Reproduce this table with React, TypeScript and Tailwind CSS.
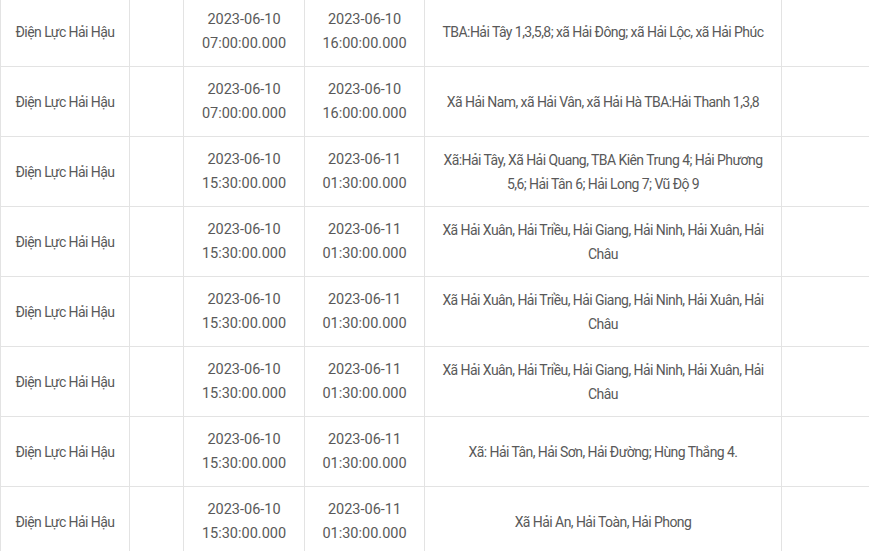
const rows = [
  { from: '2023-06-10', fromT: '07:00:00.000', to: '2023-06-10', toT: '16:00:00.000', area: 'TBA:Hải Tây 1,3,5,8; xã Hải Đông; xã Hải Lộc, xã Hải Phúc' },
  { from: '2023-06-10', fromT: '07:00:00.000', to: '2023-06-10', toT: '16:00:00.000', area: 'Xã Hải Nam, xã Hải Vân, xã Hải Hà TBA:Hải Thanh 1,3,8' },
  { from: '2023-06-10', fromT: '15:30:00.000', to: '2023-06-11', toT: '01:30:00.000', area: 'Xã:Hải Tây, Xã Hải Quang, TBA Kiên Trung 4; Hải Phương 5,6; Hải Tân 6; Hải Long 7; Vũ Độ 9' },
  { from: '2023-06-10', fromT: '15:30:00.000', to: '2023-06-11', toT: '01:30:00.000', area: 'Xã Hải Xuân, Hải Triều, Hải Giang, Hải Ninh, Hải Xuân, Hải Châu' },
  { from: '2023-06-10', fromT: '15:30:00.000', to: '2023-06-11', toT: '01:30:00.000', area: 'Xã Hải Xuân, Hải Triều, Hải Giang, Hải Ninh, Hải Xuân, Hải Châu' },
  { from: '2023-06-10', fromT: '15:30:00.000', to: '2023-06-11', toT: '01:30:00.000', area: 'Xã Hải Xuân, Hải Triều, Hải Giang, Hải Ninh, Hải Xuân, Hải Châu' },
  { from: '2023-06-10', fromT: '15:30:00.000', to: '2023-06-11', toT: '01:30:00.000', area: 'Xã: Hải Tân, Hải Sơn, Hải Đường; Hùng Thắng 4.' },
  { from: '2023-06-10', fromT: '15:30:00.000', to: '2023-06-11', toT: '01:30:00.000', area: 'Xã Hải An, Hải Toàn, Hải Phong' },
];

export default function App() {
  const td = 'border border-[#e3e3e3] px-[8px] py-[10px] text-center align-middle';
  const txt = 'text-[14px] tracking-[-0.04em]';
  const num = 'text-[14.5px]';
  return (
    <div className="w-[869px] h-[551px] overflow-hidden bg-white">
      <table
        className="table-fixed border-collapse w-[869px] -mt-[4px] leading-[24px] text-[#595959]"
        style={{ fontFamily: 'Roboto, "Noto Sans", sans-serif' }}
      >
        <colgroup>
          <col className="w-[129px]" />
          <col className="w-[54px]" />
          <col className="w-[121px]" />
          <col className="w-[120px]" />
          <col className="w-[357px]" />
          <col className="w-[88px]" />
        </colgroup>
        <tbody>
          {rows.map((r, i) => (
            <tr key={i} className="h-[70px]">
              <td className={`${td} ${txt}`}>Điện Lực Hải Hậu</td>
              <td className={td}></td>
              <td className={`${td} ${num}`}>{r.from}<br />{r.fromT}</td>
              <td className={`${td} ${num}`}>{r.to}<br />{r.toT}</td>
              <td className={`${td} ${txt}`}>{r.area}</td>
              <td className={td}></td>
            </tr>
          ))}
        </tbody>
      </table>
    </div>
  );
}
